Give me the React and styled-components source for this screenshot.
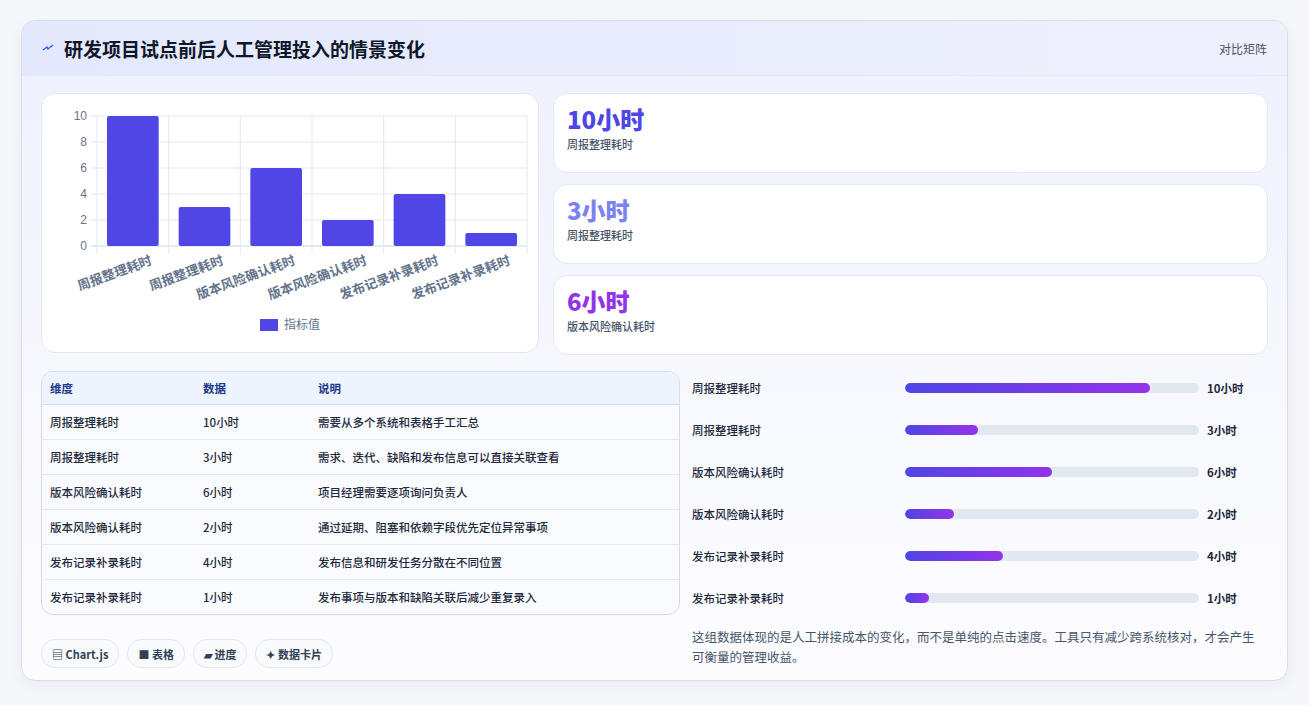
import React from 'react'
import styled, {createGlobalStyle} from 'styled-components'

const Global = createGlobalStyle`
  body { margin: 0; background: #f6f7fb; font-family: "Noto Sans CJK SC", "Noto Sans", sans-serif; color: #1e293b; }
`

const Page = styled.div`
  padding: 20px 21px 21px 21px;
  box-sizing: border-box;
  height: 705px;
`

const Panel = styled.div`
  border: 1px solid #d9dcf2;
  border-radius: 14px;
  background: linear-gradient(180deg, #eef1fd 0%, #f8f9fe 60%, #fcfcff 100%);
  overflow: hidden;
  box-shadow: 0 4px 14px rgba(30,41,90,.06);
`

const Header = styled.div`
  height: 54px;
  display: flex;
  align-items: center;
  justify-content: space-between;
  padding: 0 20px;
  background: linear-gradient(90deg, #e3e8fc, #eef0fc);
  border-bottom: 1px solid #e2e6f5;
`

const Title = styled.h1`
  margin: 0;
  font-size: 19px;
  font-weight: 700;
  color: #0f172a;
  display: flex;
  align-items: center;
  gap: 10px;
`

const Tag = styled.span`
  font-size: 12px;
  color: #475569;
`

const Body = styled.div`
  padding: 17px 19px 12px 19px;
  display: flex;
  flex-direction: column;
  gap: 12px;
`

const TopRow = styled.div`
  display: grid;
  grid-template-columns: 498px 1fr;
  gap: 14px;
`

const ChartCard = styled.div`
  background: #fff;
  border: 1px solid #e3e7f1;
  border-radius: 14px;
  height: 260px;
  box-sizing: border-box;
`

const Stats = styled.div`
  display: flex;
  flex-direction: column;
  gap: 11px;
`

const Stat = styled.div`
  background: #fff;
  border: 1px solid #e3e7f1;
  border-radius: 14px;
  height: 80px;
  box-sizing: border-box;
  padding: 8px 13px;
`

const StatValue = styled.div`
  font-size: 24px;
  font-weight: 800;
  line-height: 34px;
  color: ${p => p.$color};
`

const StatLabel = styled.div`
  font-size: 11px;
  color: #475569;
  font-weight: 500;
`

const BottomRow = styled.div`
  display: grid;
  grid-template-columns: 639px 1fr;
  gap: 12px;
`

const Left = styled.div`
  display: flex;
  flex-direction: column;
  gap: 24px;
  padding-top: 4px;
`

const Table = styled.table`
  width: 100%;
  border-collapse: separate;
  border-spacing: 0;
  border: 1px solid #d6dcea;
  border-radius: 12px;
  overflow: hidden;
  font-size: 11.5px;
  background: #f9fbfe;
  th {
    background: #eef4fe;
    color: #1e3a8a;
    font-weight: 600;
    text-align: left;
    height: 32px;
    padding: 0 8px;
    border-bottom: 1px solid #d6dcea;
  }
  td {
    height: 34px;
    padding: 0 8px;
    font-weight: 500;
    color: #1e293b;
    border-bottom: 1px solid #e6ebf3;
  }
  tr:last-child td { border-bottom: none; }
`

const Chips = styled.div`
  display: flex;
  gap: 8px;
`

const Chip = styled.span`
  height: 27px;
  padding: 0 10px;
  border: 1px solid #e3e7f1;
  border-radius: 14px;
  background: #f8fafc;
  font-size: 11px;
  font-weight: 600;
  color: #334155;
  display: flex;
  align-items: center;
  gap: 3px;
`

const Right = styled.div`
  display: flex;
  flex-direction: column;
`

const BarRow = styled.div`
  height: 42px;
  display: grid;
  grid-template-columns: 205px 294px 1fr;
  gap: 8px;
  align-items: center;
  font-size: 11.5px;
  font-weight: 500;
  color: #1e293b;
`

const Value = styled.span`
  font-weight: 700;
`

const Track = styled.div`
  height: 10px;
  border-radius: 5px;
  background: #e2e8f0;
  overflow: hidden;
`

const Fill = styled.div`
  height: 100%;
  border-radius: 5px;
  background: linear-gradient(90deg, #4f46e5, #9333ea);
`

const Note = styled.p`
  margin: 8px 0 0;
  font-size: 12.5px;
  line-height: 20px;
  color: #475569;
  padding-right: 6px;
`

const rows = [
  ['周报整理耗时', 10, '需要从多个系统和表格手工汇总'],
  ['周报整理耗时', 3, '需求、迭代、缺陷和发布信息可以直接关联查看'],
  ['版本风险确认耗时', 6, '项目经理需要逐项询问负责人'],
  ['版本风险确认耗时', 2, '通过延期、阻塞和依赖字段优先定位异常事项'],
  ['发布记录补录耗时', 4, '发布信息和研发任务分散在不同位置'],
  ['发布记录补录耗时', 1, '发布事项与版本和缺陷关联后减少重复录入'],
]

const Chart = () => {
  const L = 55, R = 485, T = 22, B = 152
  const w = (R - L) / 6
  const y = v => B - (v / 10) * (B - T)
  return (
    <svg width="498" height="260" style={{display: 'block'}}>
      {[0, 2, 4, 6, 8, 10].map(v => (
        <g key={v}>
          <line x1={L - 6} x2={R} y1={y(v)} y2={y(v)} stroke={v === 0 ? '#cbd5e1' : '#e5e7eb'} />
          <text x={L - 10} y={y(v) + 4} textAnchor="end" fontSize="12" fill="#64748b" fontFamily="Liberation Sans, sans-serif">{v}</text>
        </g>
      ))}
      {[0, 1, 2, 3, 4, 5, 6].map(i => (
        <line key={i} x1={L + i * w} x2={L + i * w} y1={T} y2={B + 8} stroke="#e5e7eb" />
      ))}
      {rows.map((r, i) => (
        <g key={i}>
          <rect x={L + i * w + 10} y={y(r[1])} width={w - 20} height={B - y(r[1])} rx="2" fill="#4f46e5" />
          <text transform={`translate(${L + i * w + w / 2 + 20},${B + 18}) rotate(-20)`} textAnchor="end" fontSize="13" fontWeight="600" fill="#64748b">{r[0]}</text>
        </g>
      ))}
      <rect x="218" y="225" width="18" height="12" fill="#4f46e5" />
      <text x="242" y="235" fontSize="12" fill="#64748b">指标值</text>
    </svg>
  )
}

export default function App() {
  return (
    <Page>
      <Global />
      <Panel>
        <Header>
          <Title>
            <svg width="12" height="10" viewBox="0 0 12 10"><path d="M1 7 L5 4 L6 6 L11 2" stroke="#2563eb" strokeWidth="1.4" fill="none" /></svg>
            研发项目试点前后人工管理投入的情景变化
          </Title>
          <Tag>对比矩阵</Tag>
        </Header>
        <Body>
          <TopRow>
            <ChartCard><Chart /></ChartCard>
            <Stats>
              <Stat><StatValue $color="#4f46e5">10小时</StatValue><StatLabel>周报整理耗时</StatLabel></Stat>
              <Stat><StatValue $color="#7c83f0">3小时</StatValue><StatLabel>周报整理耗时</StatLabel></Stat>
              <Stat><StatValue $color="#9333ea">6小时</StatValue><StatLabel>版本风险确认耗时</StatLabel></Stat>
            </Stats>
          </TopRow>
          <BottomRow>
            <Left>
              <Table>
                <thead>
                  <tr><th style={{width: 137}}>维度</th><th style={{width: 99}}>数据</th><th>说明</th></tr>
                </thead>
                <tbody>
                  {rows.map((r, i) => (
                    <tr key={i}><td>{r[0]}</td><td>{r[1]}小时</td><td>{r[2]}</td></tr>
                  ))}
                </tbody>
              </Table>
              <Chips>
                <Chip>▤ Chart.js</Chip>
                <Chip>■ 表格</Chip>
                <Chip>▰ 进度</Chip>
                <Chip>✦ 数据卡片</Chip>
              </Chips>
            </Left>
            <Right>
              {rows.map((r, i) => (
                <BarRow key={i}>
                  <span>{r[0]}</span>
                  <Track><Fill style={{width: `${r[1] * 8.33}%`}} /></Track>
                  <Value>{r[1]}小时</Value>
                </BarRow>
              ))}
              <Note>这组数据体现的是人工拼接成本的变化，而不是单纯的点击速度。工具只有减少跨系统核对，才会产生可衡量的管理收益。</Note>
            </Right>
          </BottomRow>
        </Body>
      </Panel>
    </Page>
  )
}
